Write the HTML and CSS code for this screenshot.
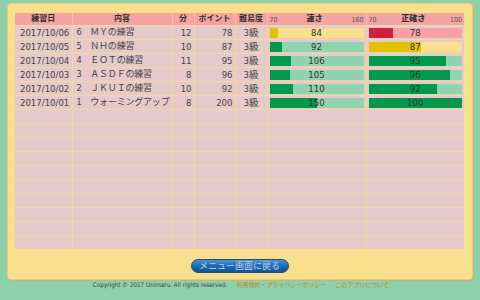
FILE: index.html
```html
<!DOCTYPE html>
<html>

<head>
    <title>練習の記録</title>
    <meta charset="utf-8">
    <meta name="viewport" content="width=device-width, initial-scale=1.0">
    <link rel="stylesheet" href="styles.css">
</head>

<body>

    <div class="waku">
        <table class="kiroku">
            <colgroup>
                <col class="c-hi">
                <col class="c-naiyou">
                <col class="c-fun">
                <col class="c-pt">
                <col class="c-nan">
                <col class="c-haya">
                <col class="c-sei">
            </colgroup>
            <thead>
                <tr>
                    <th>練習日</th>
                    <th>内容</th>
                    <th>分</th>
                    <th>ポイント</th>
                    <th>難易度</th>
                    <th><div class="scale"><span>70</span><b>速さ</b><span>160</span></div></th>
                    <th><div class="scale"><span>70</span><b>正確さ</b><span>100</span></div></th>
                </tr>
            </thead>
            <tbody>
                <tr>
                    <td>2017/10/06</td>
                    <td class="naiyou">6　ＭＹの練習</td>
                    <td class="num">12</td>
                    <td class="num">78</td>
                    <td class="kyu">3級</td>
                    <td><div class="bar kiiro"><div class="fill" style="width:8.75%"></div><span>84</span></div></td>
                    <td><div class="bar aka"><div class="fill" style="width:26.67%"></div><span>78</span></div></td>
                </tr>
                <tr>
                    <td>2017/10/05</td>
                    <td class="naiyou">5　ＮＨの練習</td>
                    <td class="num">10</td>
                    <td class="num">87</td>
                    <td class="kyu">3級</td>
                    <td><div class="bar midori"><div class="fill" style="width:13.75%"></div><span>92</span></div></td>
                    <td><div class="bar kiiro"><div class="fill" style="width:56.67%"></div><span>87</span></div></td>
                </tr>
                <tr>
                    <td>2017/10/04</td>
                    <td class="naiyou">4　ＥＯＴの練習</td>
                    <td class="num">11</td>
                    <td class="num">95</td>
                    <td class="kyu">3級</td>
                    <td><div class="bar midori"><div class="fill" style="width:22.5%"></div><span>106</span></div></td>
                    <td><div class="bar midori"><div class="fill" style="width:83.33%"></div><span>95</span></div></td>
                </tr>
                <tr>
                    <td>2017/10/03</td>
                    <td class="naiyou">3　ＡＳＤＦの練習</td>
                    <td class="num">8</td>
                    <td class="num">96</td>
                    <td class="kyu">3級</td>
                    <td><div class="bar midori"><div class="fill" style="width:21.88%"></div><span>105</span></div></td>
                    <td><div class="bar midori"><div class="fill" style="width:86.67%"></div><span>96</span></div></td>
                </tr>
                <tr>
                    <td>2017/10/02</td>
                    <td class="naiyou">2　ＪＫＵＩの練習</td>
                    <td class="num">10</td>
                    <td class="num">92</td>
                    <td class="kyu">3級</td>
                    <td><div class="bar midori"><div class="fill" style="width:25%"></div><span>110</span></div></td>
                    <td><div class="bar midori"><div class="fill" style="width:73.33%"></div><span>92</span></div></td>
                </tr>
                <tr>
                    <td>2017/10/01</td>
                    <td class="naiyou">1　ウォーミングアップ</td>
                    <td class="num">8</td>
                    <td class="num">200</td>
                    <td class="kyu">3級</td>
                    <td><div class="bar midori"><div class="fill" style="width:50%"></div><span>150</span></div></td>
                    <td><div class="bar midori"><div class="fill" style="width:100%"></div><span>100</span></div></td>
                </tr>
                <!-- 空の行 -->
                <tr><td></td><td></td><td></td><td></td><td></td><td></td><td></td></tr>
                <tr><td></td><td></td><td></td><td></td><td></td><td></td><td></td></tr>
                <tr><td></td><td></td><td></td><td></td><td></td><td></td><td></td></tr>
                <tr><td></td><td></td><td></td><td></td><td></td><td></td><td></td></tr>
                <tr><td></td><td></td><td></td><td></td><td></td><td></td><td></td></tr>
                <tr><td></td><td></td><td></td><td></td><td></td><td></td><td></td></tr>
                <tr><td></td><td></td><td></td><td></td><td></td><td></td><td></td></tr>
                <tr><td></td><td></td><td></td><td></td><td></td><td></td><td></td></tr>
                <tr><td></td><td></td><td></td><td></td><td></td><td></td><td></td></tr>
                <tr><td></td><td></td><td></td><td></td><td></td><td></td><td></td></tr>
            </tbody>
        </table>

        <div class="modoru">
            <button class="menu">メニュー画面に戻る</button>
        </div>
    </div>

    <footer>
        <span>Copyright © 2017 Unimaru. All rights reserved.</span>
        <a href="#">利用規約・プライバシーポリシー</a>
        <a href="#">このアプリについて</a>
    </footer>

</body>

</html>
```

FILE: styles.css
```css
body {
    margin: 0;
    background-color: #8dd0aa;
    font-family: "DejaVu Sans Condensed", "Noto Sans CJK JP", sans-serif;
    color: #444;
}

.waku {
    box-sizing: border-box;
    width: 466px;
    height: 277px;
    margin: 3px 0 0 7px;
    padding: 9px 8px 0 7px;
    background-color: #f8df8c;
    border: 1px solid #ecc878;
    border-radius: 4px;
    box-shadow: 1px 1px 0 #c9b27a;
}

.kiroku {
    width: 449px;
    border-collapse: collapse;
    table-layout: fixed;
    font-size: 9.5px;
}

.c-hi { width: 57px; }
.c-naiyou { width: 100px; }
.c-fun { width: 22px; }
.c-pt { width: 41px; }
.c-nan { width: 32px; }
.c-haya { width: 99px; }
.c-sei { width: 98px; }

th {
    height: 12px;
    padding: 0 2px;
    background-color: #f5a3a3;
    border-left: 1px solid #f4c4b0;
    font-size: 8px;
    font-weight: bold;
    color: #333;
    line-height: 12px;
    white-space: nowrap;
}

th:first-child {
    border-left: none;
}

.scale {
    display: flex;
    justify-content: space-between;
    align-items: flex-end;
}

.scale span {
    font-weight: normal;
    font-size: 7px;
    line-height: 10px;
    color: #555;
}

td {
    height: 13px;
    padding: 0 4px;
    background-color: #e6c9c9;
    border: 1px solid #f2d9a0;
    line-height: 13px;
    white-space: nowrap;
    overflow: hidden;
}

tr td:first-child {
    border-left: none;
    padding-left: 5px;
}

tr td:last-child {
    border-right: none;
}

tbody tr:last-child td {
    border-bottom: none;
}

td.naiyou {
    padding-right: 0;
    font-size: 9px;
    letter-spacing: -0.2px;
}

td.num {
    text-align: right;
    padding-right: 2px;
}

td.kyu {
    text-align: center;
    padding: 0;
}

td:nth-child(6),
td:nth-child(7) {
    padding: 0 2px;
}

.bar {
    position: relative;
    height: 10px;
    text-align: center;
    line-height: 10px;
    color: #333;
}

.bar .fill {
    position: absolute;
    left: 0;
    top: 0;
    bottom: 0;
}

.bar span {
    position: relative;
}

.midori {
    background-color: #8fd4ae;
}

.midori .fill {
    background-color: #009a4f;
}

.kiiro {
    background-color: #f9e08f;
}

.kiiro .fill {
    background-color: #e0c200;
}

.aka {
    background-color: #f5a0a4;
}

.aka .fill {
    background-color: #d21f3e;
}

.modoru {
    text-align: center;
    margin-top: 5px;
}

.menu {
    width: 98px;
    height: 14px;
    padding: 0;
    border: 1px solid #1c4f86;
    border-radius: 7px;
    background: linear-gradient(#4893d6, #1a6cb8 50%, #0d559c);
    color: #c2d2e2;
    font-family: "Noto Sans CJK JP", sans-serif;
    font-size: 9px;
    line-height: 12px;
}

footer {
    display: flex;
    justify-content: center;
    gap: 9px;
    margin-top: 1px;
    margin-left: 2px;
    font-size: 6.3px;
    line-height: 8px;
    color: #444;
}

footer a {
    color: #b58d2e;
    text-decoration: none;
    font-size: 6px;
}
```
